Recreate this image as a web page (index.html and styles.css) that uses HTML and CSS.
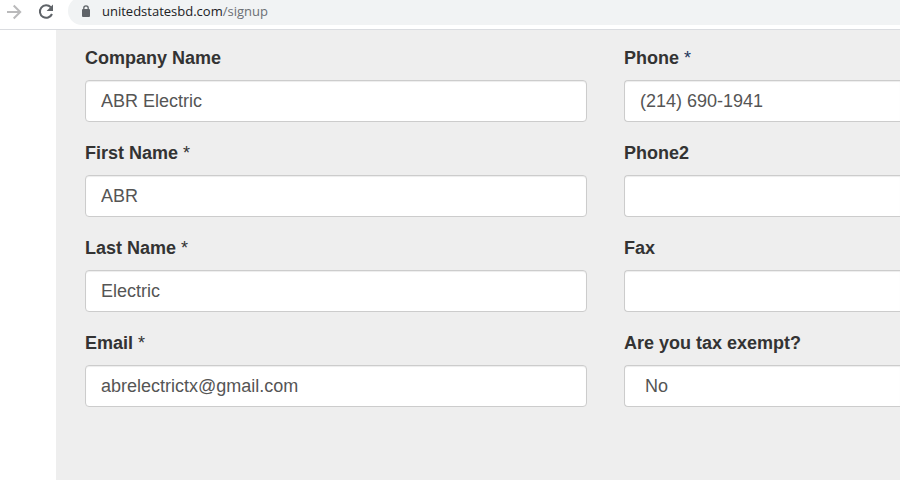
FILE: index.html
```
<!DOCTYPE html>
<html lang="en">
<head>
<meta charset="utf-8">
<title>Sign up</title>
<link rel="stylesheet" href="styles.css">
</head>
<body>
<header class="toolbar">
  <button class="nav-button" type="button" aria-label="Forward">
    <svg width="20" height="20" viewBox="0 0 20 20" fill="none" stroke="#bababb" stroke-width="2"><path d="M3 11h13M9.7 4.5l6.5 6.5-6.5 6.5"/></svg>
  </button>
  <button class="nav-button" type="button" aria-label="Reload">
    <svg width="20" height="20" viewBox="0 0 20 20"><path d="M14.8 6.2A6.3 6.3 0 1 0 16 13" fill="none" stroke="#5f6368" stroke-width="2"/><path d="M17 3.6v6.4h-6.4z" fill="#5f6368"/></svg>
  </button>
  <div class="address">
    <svg width="10" height="13" viewBox="0 0 10 13"><rect x="1" y="4" width="8" height="8" rx="1" fill="#5f6368"/><path d="M2.8 5V3a2.2 2.2 0 0 1 4.4 0v2" fill="none" stroke="#5f6368" stroke-width="1.3"/></svg>
    <span class="url">unitedstatesbd.com<span class="path">/signup</span></span>
  </div>
</header>
<main class="page">
  <form class="form">
    <div class="field"><label for="company">Company Name</label><input id="company" type="text" value="ABR Electric"></div>
    <div class="field edge"><label for="phone">Phone <span class="required phone-mark">*</span></label><input id="phone" type="tel" value="(214) 690-1941"></div>
    <div class="field"><label for="first">First Name <span class="required">*</span></label><input id="first" type="text" value="ABR"></div>
    <div class="field edge"><label for="phone2">Phone2</label><input id="phone2" type="tel"></div>
    <div class="field"><label for="last">Last Name <span class="required">*</span></label><input id="last" type="text" value="Electric"></div>
    <div class="field edge"><label for="fax">Fax</label><input id="fax" type="tel"></div>
    <div class="field"><label for="email">Email <span class="required">*</span></label><input id="email" type="email" value="abrelectrictx@gmail.com"></div>
    <div class="field edge"><label for="exempt">Are you tax exempt?</label><select id="exempt"><option>No</option><option>Yes</option></select></div>
  </form>
</main>
</body>
</html>
```
FILE: styles.css
```
* {
  box-sizing: border-box;
}

body {
  margin: 0;
  min-height: 100vh;
  display: flex;
  flex-direction: column;
  background: #fff;
  color: #333;
  font: 18px/26px "Liberation Sans", Arial, sans-serif;
}

.toolbar {
  display: flex;
  height: 30px;
  padding-left: 4px;
  overflow: hidden;
  border-bottom: 1px solid #dadce0;
}

.nav-button {
  width: 32px;
  height: 22px;
  padding: 0;
  border: 0;
  background: none;
  text-align: left;
}

.nav-button svg {
  display: block;
}

.address {
  flex: 1;
  display: flex;
  align-items: center;
  gap: 11px;
  height: 28px;
  margin-top: -3px;
  padding-left: 13px;
  border-radius: 14px 0 0 14px;
  background: #f1f3f4;
  font: 13px/20px "Open Sans", "Noto Sans", sans-serif;
}

.url {
  color: #202124;
}

.path {
  color: #6b6f74;
}

.page {
  flex: 1;
  margin-left: 56px;
  padding: 15px 0 0 29px;
  background: #eee;
}

.form {
  display: grid;
  grid-template-columns: minmax(0, 502fr) minmax(0, 276fr);
  gap: 18px 37px;
}

.field {
  display: flex;
  flex-direction: column;
  gap: 9px;
}

label {
  font-weight: bold;
}

.required {
  font-weight: normal;
}

.phone-mark {
  color: #24365c;
}

input,
select {
  width: 100%;
  height: 42px;
  margin: 0;
  padding: 6px 15px;
  border: 1px solid #ccc;
  border-radius: 4px;
  background: #fff;
  box-shadow: inset 0 1px 1px rgba(0, 0, 0, 0.075);
  color: #555;
  font: inherit;
}

select {
  appearance: none;
  padding-left: 20px;
}

.edge input,
.edge select {
  border-right: 0;
  border-radius: 4px 0 0 4px;
}
```
